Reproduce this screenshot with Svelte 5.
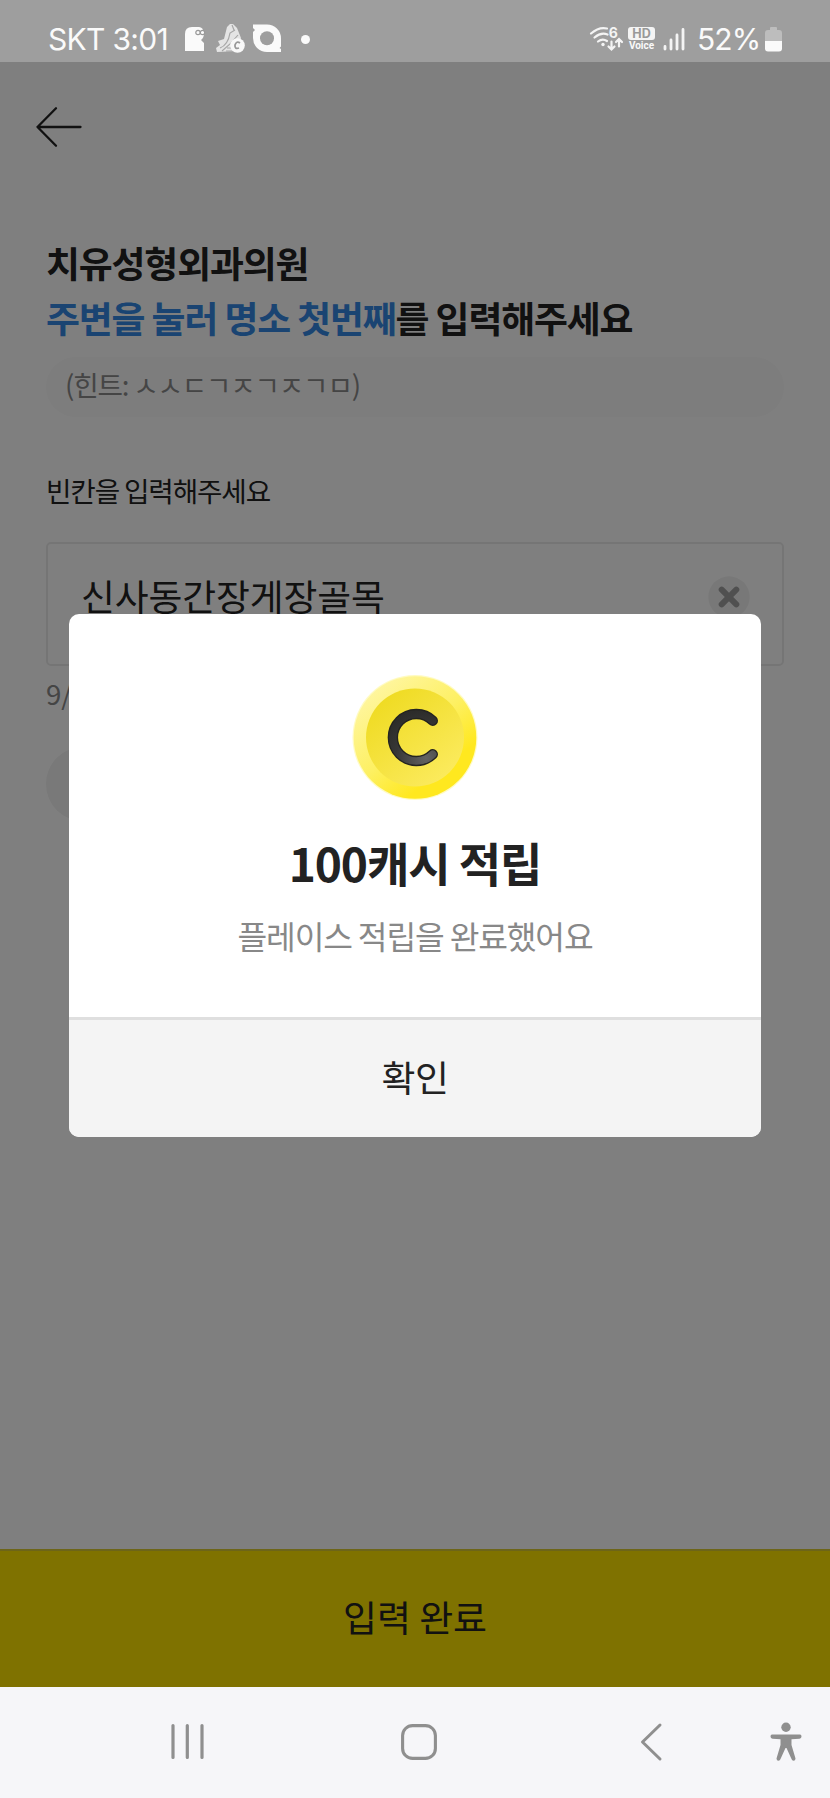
<script>
  let answer = $state('신사동간장게장골목');
  let open = $state(true);

  const hint = 'ㅅㅅㄷㄱㅈㄱㅈㄱㅁ';
  const battery = 52;
</script>

<div class="phone">
  <header class="status">
    <span class="carrier">SKT 3:01</span>
    <svg class="notif" width="100" height="32" viewBox="0 0 100 32">
      <path d="M1 11Q1 4 8 4H15Q19 4 20 10Q20 15 17 17L20 20V28H1Z" fill="#fafafa" />
      <circle cx="14" cy="9.500" r="2.200" fill="#fafafa" stroke="#999" stroke-width="1.200" />
      <circle cx="18.500" cy="9.500" r="2.200" fill="#fafafa" stroke="#999" stroke-width="1.200" />
      <path d="M33 29L32 25L36 22L34 18L40 16L43 4L46 1H49L53 5L57 15L54 28Z" fill="#e4e4e4" />
      <path d="M36 25Q44 22 46 10L51 7M38 28Q47 21 54 12M43 25H51M42 28H50M48 2L50 7" fill="none" stroke="#a6a6a6" stroke-width="1.200" />
      <circle cx="53.500" cy="22.500" r="7.300" fill="#f8f8f8" />
      <path d="M56 20Q52.500 17.500 51 22Q50.500 26.500 55 25" fill="none" stroke="#999" stroke-width="1.800" />
      <path d="M69 1.500H83A14 14 0 0 1 97 15.500V23.500L95.500 25L97 26V29H83A14 14 0 0 1 69 15V9L71 7L69 5Z" fill="#fafafa" />
      <circle cx="83" cy="15.300" r="7" fill="#9e9e9e" />
    </svg>
    <i class="dot"></i>
    <span class="spacer"></span>
    <svg class="wifi" width="34" height="28" viewBox="0 0 34 28">
      <g fill="none" stroke="#f4f4f4" stroke-width="2.200" stroke-linecap="round">
        <path d="M2 8.500Q10 1.500 18 3.500M5.500 12.500Q12 7 18.500 9.500M9 16.500Q13.500 13 18 16" />
        <path d="M22.500 16.500V24M19.500 21.500L22.500 24.500L25.500 21.500M30 21.500V14.500M27 17L30 14L33 17" />
      </g>
      <circle cx="14" cy="19.500" r="1.700" fill="#f4f4f4" />
      <text x="19.800" y="13" font-size="14" font-weight="700" fill="#f4f4f4">6</text>
    </svg>
    <span class="hd"><b>HD</b><em>Voice</em></span>
    <svg class="signal" width="22" height="24" viewBox="0 0 22 24">
      <path d="M2 22V19.500M8 22V13M14 22V8M20 22V2.500" fill="none" stroke="#f4f4f4" stroke-width="2.800" stroke-linecap="round" />
    </svg>
    <span class="percent">{battery}%</span>
    <svg class="battery" width="17" height="25" viewBox="0 0 17 25">
      <path d="M5 1Q5 0 6 0H11Q12 0 12 1V3H14Q17 3 17 6V14H0V6Q0 3 3 3H5Z" fill="#bdbdbd" />
      <path d="M0 14H17V21.500Q17 24.500 14 24.500H3Q0 24.500 0 21.500Z" fill="#fafafa" />
    </svg>
  </header>

  <main>
    <section class="page">
      <button class="back" aria-label="뒤로">
        <svg width="48" height="42" viewBox="0 0 48 42" fill="none" stroke="#222" stroke-width="2.300" stroke-linecap="round" stroke-linejoin="round">
          <path d="M45.500 21H2.500M21 2.300L2.500 21L21 39.700" />
        </svg>
      </button>

      <h1>치유성형외과의원<br /><mark>주변을 눌러 명소 첫번째</mark>를 입력해주세요</h1>
      <p class="hint">(힌트: {hint})</p>

      <p class="label">빈칸을 입력해주세요</p>
      <div class="field">
        <span>{answer}</span>
        <button class="clear" aria-label="지우기" onclick={() => (answer = '')}>
          <svg width="42" height="42" viewBox="0 0 42 42">
            <circle cx="21" cy="21" r="20.700" fill="#f1f1f1" />
            <path d="M13.700 13.700L28.300 28.300M28.300 13.700L13.700 28.300" stroke="#a0a0a0" stroke-width="6" stroke-linecap="round" />
          </svg>
        </button>
      </div>
      <p class="count">{answer.length}/9</p>
      <div class="chip"></div>
    </section>

    <button class="submit">입력 완료</button>

    {#if open}
      <div class="dim">
        <div class="modal" role="dialog">
          <div class="modal-body">
            <svg class="coin" width="130" height="130" viewBox="0 0 130 130">
              <defs>
                <linearGradient id="rim" x1="0.150" y1="0.100" x2="0.800" y2="0.900">
                  <stop offset="0" stop-color="#fff6a0" />
                  <stop offset="0.500" stop-color="#fdf063" />
                  <stop offset="0.850" stop-color="#ffe81f" />
                </linearGradient>
                <linearGradient id="face" x1="0.150" y1="0.100" x2="0.800" y2="0.900">
                  <stop offset="0" stop-color="#efdb22" />
                  <stop offset="1" stop-color="#fbea5c" />
                </linearGradient>
                <radialGradient id="ink" gradientUnits="userSpaceOnUse" cx="76" cy="86" r="50">
                  <stop offset="0" stop-color="#636363" />
                  <stop offset="0.600" stop-color="#373736" />
                  <stop offset="1" stop-color="#2b2b29" />
                </radialGradient>
              </defs>
              <circle cx="65" cy="65.500" r="62.500" fill="#fff67a" opacity="0.450" />
              <circle cx="65" cy="65.500" r="61.300" fill="url(#rim)" />
              <circle cx="65" cy="65.500" r="49" fill="url(#face)" />
              <path d="M82.800 48.700A23.500 23.500 0 1 0 82.800 82.300" fill="none" stroke="#242420" stroke-width="10.400" stroke-linecap="round" />
              <path d="M82.800 48.700A23.500 23.500 0 1 0 82.800 82.300" fill="none" stroke="url(#ink)" stroke-width="7.600" stroke-linecap="round" />
            </svg>
            <h2>100캐시 적립</h2>
            <p>플레이스 적립을 완료했어요</p>
          </div>
          <button class="confirm" onclick={() => (open = false)}>확인</button>
        </div>
      </div>
    {/if}
  </main>

  <nav>
    <svg class="recents" width="34" height="38" viewBox="0 0 34 38">
      <path d="M3 2.500V34.500M17.300 2.500V34.500M32 2.500V34.500" stroke="#8f8f8f" stroke-width="3.200" stroke-linecap="round" />
    </svg>
    <svg class="home" width="38" height="38" viewBox="0 0 38 38">
      <rect x="2.600" y="2.600" width="32.800" height="32.800" rx="10" fill="none" stroke="#8f8f8f" stroke-width="3.100" />
    </svg>
    <svg class="prev" width="24" height="40" viewBox="0 0 24 40">
      <path d="M21 3L3.500 20L21 37" fill="none" stroke="#8f8f8f" stroke-width="3" stroke-linecap="round" stroke-linejoin="round" />
    </svg>
    <svg class="access" width="32" height="40" viewBox="0 0 32 40" fill="#8f8f8f">
      <circle cx="16" cy="5.200" r="4.700" />
      <path d="M2 12.500H30Q31.500 12.500 31.500 14.500Q31.500 16.500 29.500 16.800L21.500 17.300V23L25.500 36.500Q25.500 38.700 23.500 38.700Q22 38.700 21.500 37L16.500 26H15.500L10.500 37Q10 38.700 8.500 38.700Q6.500 38.700 6.500 36.500L10.500 23V17.300L2.500 16.800Q.5 16.500 .5 14.500Q.5 12.500 2 12.500Z" />
    </svg>
  </nav>
</div>

<style>
  :global(body) {
    background: #f6f6f9;
  }
  .phone {
    width: 830px;
    height: 1798px;
    display: flex;
    flex-direction: column;
    overflow: hidden;
    font-family: "Noto Sans CJK KR", sans-serif;
    color: #222;
  }
  button {
    font: inherit;
    color: inherit;
    border: 0;
    padding: 0;
    background: none;
    cursor: pointer;
  }
  svg {
    display: block;
    flex: none;
  }
  h1, h2, p {
    margin: 0;
  }

  .status {
    height: 62px;
    box-sizing: border-box;
    padding: 16px 48px 0 48px;
    display: flex;
    align-items: center;
    background: #9e9e9e;
    color: #fafafa;
    font-family: Inter, Roboto, sans-serif;
    font-size: 30px;
    white-space: nowrap;
  }
  .carrier {
    width: 136px;
    letter-spacing: -0.7px;
  }
  .dot {
    width: 9px;
    height: 9px;
    margin-left: 17px;
    border-radius: 50%;
    background: #fafafa;
  }
  .spacer {
    flex: 1;
  }
  .wifi {
    margin-right: 5px;
    overflow: visible;
  }
  .hd {
    width: 27px;
    margin-right: 8px;
    display: flex;
    flex-direction: column;
    align-items: center;
    line-height: 1;
  }
  .hd b {
    width: 27px;
    height: 13px;
    border-radius: 3px;
    background: #f4f4f4;
    color: #999;
    font-size: 12.5px;
    line-height: 13px;
    text-align: center;
  }
  .hd em {
    font: 700 10px/11px Roboto, sans-serif;
  }
  .signal {
    margin-right: 12px;
  }
  .percent {
    width: 68px;
    letter-spacing: -0.9px;
  }

  main {
    flex: 1;
    position: relative;
    display: flex;
    flex-direction: column;
    background: #fff;
  }
  .page {
    flex: 1;
    padding: 44px 46px 0;
  }
  .back {
    display: block;
    margin-left: -11px;
  }
  h1 {
    margin-top: 87px;
    font-size: 36.9px;
    line-height: 55.3px;
    font-weight: 700;
    letter-spacing: -1.15px;
  }
  mark {
    background: none;
    color: #3488e4;
  }
  .hint {
    height: 60px;
    margin-top: 11px;
    padding-left: 19px;
    border-radius: 30px;
    background: #fafafa;
    color: #8a8a8a;
    font-size: 27.7px;
    line-height: 54px;
    letter-spacing: -1.2px;
  }
  .label {
    margin-top: 52px;
    font-size: 27.7px;
    line-height: 42px;
    letter-spacing: -1.15px;
  }
  .field {
    height: 124px;
    margin-top: 31px;
    box-sizing: border-box;
    padding: 0 32px 14px 33px;
    display: flex;
    align-items: center;
    justify-content: space-between;
    border: 2px solid #ebebeb;
    border-radius: 5px;
    font-size: 36.8px;
    letter-spacing: -0.1px;
  }
  .field span {
    margin-bottom: 3px;
  }
  .count {
    margin-top: 6px;
    color: #8a8a8a;
    font-size: 27.7px;
    line-height: 42px;
  }
  .chip {
    width: 360px;
    height: 74px;
    margin-top: 33px;
    border-radius: 37px;
    background: #f2f2f2;
  }
  .submit {
    height: 138px;
    padding-bottom: 6px;
    border-top: 2px solid #dacb33;
    background: #ffe400;
    font-size: 36.9px;
  }

  .dim {
    position: absolute;
    inset: 0;
    display: flex;
    align-items: center;
    justify-content: center;
    background: rgba(0, 0, 0, 0.5);
  }
  .modal {
    width: 692px;
    height: 523px;
    margin-top: 1px;
    display: flex;
    flex-direction: column;
    overflow: hidden;
    border-radius: 10px;
    background: #fff;
  }
  .modal-body {
    flex: 1;
    padding-top: 58px;
    display: flex;
    flex-direction: column;
    align-items: center;
  }
  h2 {
    margin-top: 27px;
    font-size: 46.1px;
    line-height: 66px;
    font-weight: 700;
    letter-spacing: -1.15px;
  }
  .modal-body p {
    margin-top: 16px;
    color: #888;
    font-size: 32.3px;
    line-height: 48px;
    letter-spacing: -1.15px;
  }
  .confirm {
    height: 120px;
    padding-bottom: 4px;
    border-top: 3px solid #dfdfdf;
    background: #f4f4f4;
    font-size: 36.9px;
    letter-spacing: -0.5px;
  }

  nav {
    height: 111px;
    display: flex;
    align-items: center;
    box-sizing: border-box;
    padding: 0 0 1px 170px;
    background: #f6f6f9;
  }
  .home {
    margin-left: 196px;
  }
  .prev {
    margin-left: 201px;
  }
  .access {
    margin-left: 107px;
  }
</style>
